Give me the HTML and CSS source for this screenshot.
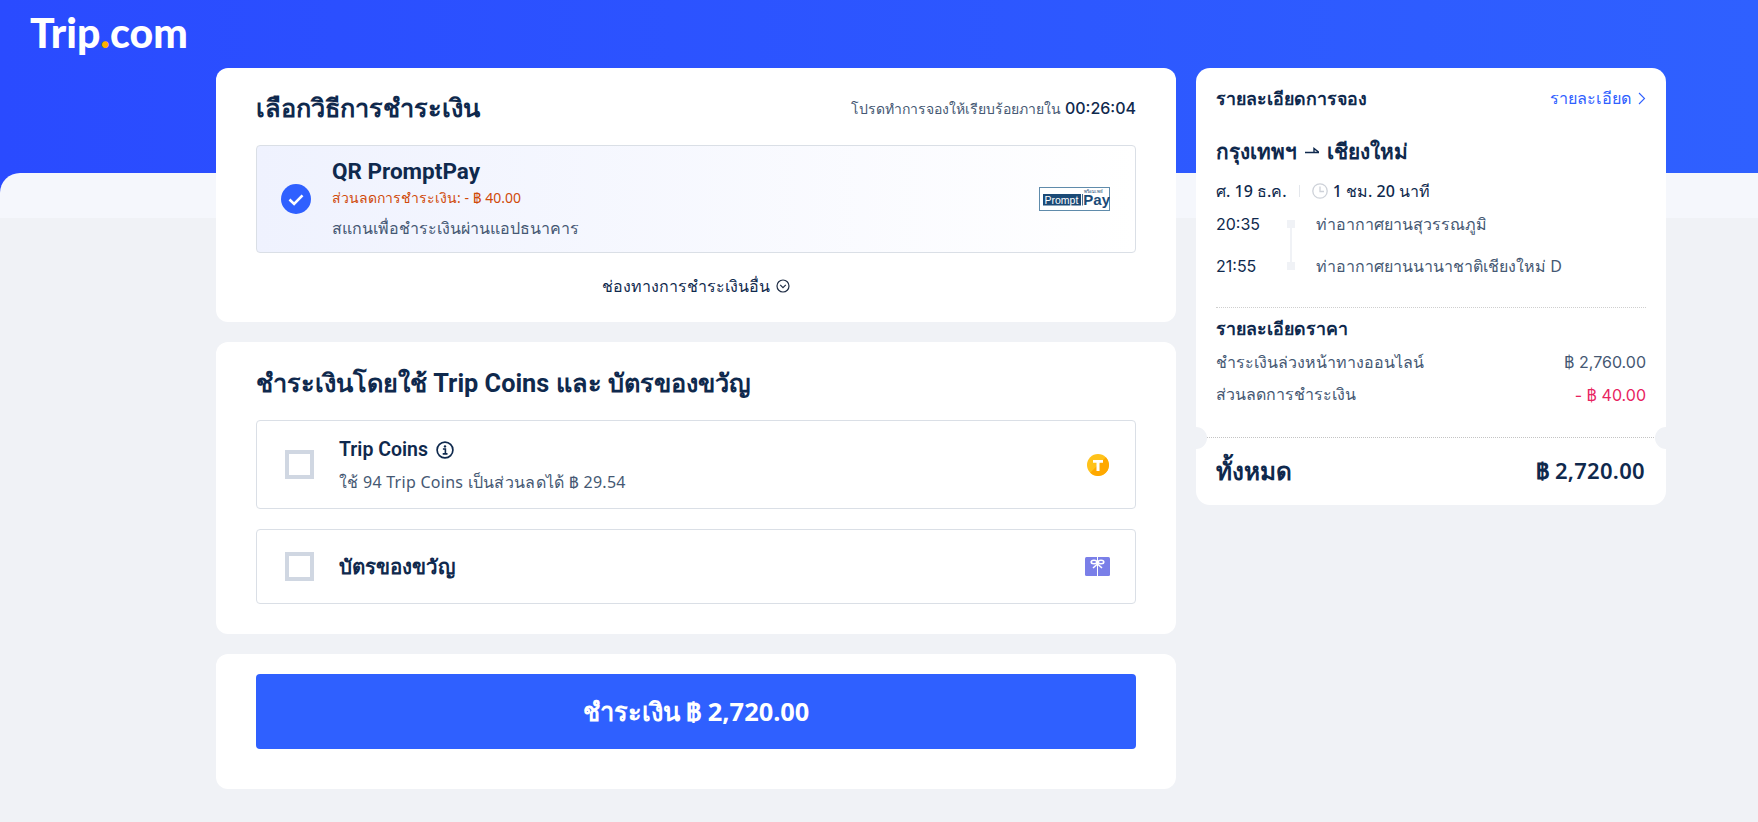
FILE: index.html
```html
<!DOCTYPE html>
<html lang="th">
<head>
    <meta charset="UTF-8">
    <meta name="viewport" content="width=device-width, initial-scale=1.0">
    <title>Trip.com</title>
    <link rel="stylesheet" href="styles.css">
</head>
<body>
    <div class="hero"></div>
    <div class="hero-band"></div>

    <header class="top-bar">
        <a class="logo">Trip<span class="logo-dot">.</span>com</a>
    </header>

    <main class="layout">
        <div class="main-col">
            <section class="card pay-card">
                <div class="card-head">
                    <h2>เลือกวิธีการชำระเงิน</h2>
                    <div class="timer">โปรดทำการจองให้เรียบร้อยภายใน <b>00:26:04</b></div>
                </div>
                <div class="option option-selected">
                    <span class="radio">
                        <svg width="30" height="30" viewBox="0 0 30 30"><circle cx="15" cy="15" r="15" fill="#2f60ff"/><path d="M8.5 15.500l4.600 4.400 8.400-8.600" fill="none" stroke="#fff" stroke-width="2.600"/></svg>
                    </span>
                    <div class="option-text">
                        <div class="option-title">QR PromptPay</div>
                        <div class="option-discount">ส่วนลดการชำระเงิน: - ฿ 40.00</div>
                        <div class="option-desc">สแกนเพื่อชำระเงินผ่านแอปธนาคาร</div>
                    </div>
                    <svg class="pp-logo" width="71" height="24" viewBox="0 0 71 24">
                        <rect x="0.5" y="0.5" width="70" height="23" fill="#fff" stroke="#5f8bab"/>
                        <rect x="4" y="7" width="38" height="11.500" fill="#1b4a76"/>
                        <text x="5.500" y="16.500" class="pp-prompt">Prompt</text>
                        <rect x="43" y="7" width="0.800" height="11.500" fill="#1b4a76"/>
                        <text x="44.300" y="17.500" class="pp-pay">Pay</text>
                        <text x="45" y="5.500" class="pp-thai">พร้อมเพย์</text>
                    </svg>
                </div>
                <div class="more-pay">
                    <span>ช่องทางการชำระเงินอื่น</span>
                    <svg width="14" height="14" viewBox="0 0 14 14"><circle cx="7" cy="7" r="6" fill="none" stroke="#1f2d45" stroke-width="1.200"/><path d="M4.200 5.800L7 8.600l2.800-2.800" fill="none" stroke="#1f2d45" stroke-width="1.200"/></svg>
                </div>
            </section>

            <section class="card coin-card">
                <h2>ชำระเงินโดยใช้ Trip Coins และ บัตรของขวัญ</h2>
                <div class="option option-coins">
                    <span class="checkbox"></span>
                    <div class="option-text">
                        <div class="coin-title">Trip Coins
                            <svg width="18" height="18" viewBox="0 0 18 18"><circle cx="9" cy="9" r="7.900" fill="none" stroke="#0f294d" stroke-width="1.700"/><circle cx="9" cy="5.400" r="1.200" fill="#0f294d"/><path d="M6.900 8h2.500v4.600M6.700 12.900h4.800" fill="none" stroke="#0f294d" stroke-width="1.600"/></svg>
                        </div>
                        <div class="option-desc">ใช้ 94 Trip Coins เป็นส่วนลดได้ ฿ 29.54</div>
                    </div>
                    <svg class="end-icon" width="22" height="22" viewBox="0 0 22 22"><circle cx="11" cy="11" r="11" fill="#ffc21a"/><path d="M3.200 18.800A11 11 0 0 0 18.800 3.200z" fill="#ffa800"/><path d="M6 6h10v2.700h-3.500V17H9.500V8.700H6z" fill="#fff"/></svg>
                </div>
                <div class="option option-gift">
                    <span class="checkbox"></span>
                    <div class="coin-title">บัตรของขวัญ</div>
                    <svg class="end-icon" width="25" height="19" viewBox="0 0 25 19"><rect width="25" height="19" rx="1.500" fill="#7a7fe8"/><path d="M12.500 0v19" stroke="#fff" stroke-width="1"/><ellipse cx="9" cy="5" rx="2.800" ry="1.700" fill="none" stroke="#fff" stroke-width="1.600"/><ellipse cx="16" cy="5" rx="2.800" ry="1.700" fill="none" stroke="#fff" stroke-width="1.600"/><path d="M12.500 7L8 11M12.500 7l4.500 4" fill="none" stroke="#fff" stroke-width="1.600"/></svg>
                </div>
            </section>

            <section class="card submit-card">
                <button class="pay-btn" type="button">ชำระเงิน ฿ 2,720.00</button>
            </section>
        </div>

        <aside class="card summary">
            <div class="summary-head">
                <h3>รายละเอียดการจอง</h3>
                <a class="detail-link">รายละเอียด
                    <svg width="8" height="13" viewBox="0 0 8 13"><path d="M1 1l5.500 5.500L1 12" fill="none" stroke="#2f60ff" stroke-width="1.100"/></svg>
                </a>
            </div>
            <div class="route">กรุงเทพฯ
                <svg width="14" height="8" viewBox="0 0 14 8"><path d="M0 5.500h14M14 5.500L9 1.500v4" fill="none" stroke="#0f294d" stroke-width="1.400"/></svg>
                เชียงใหม่</div>
            <div class="date-row">
                <span>ศ. 19 ธ.ค.</span>
                <i class="date-sep"></i>
                <svg width="16" height="16" viewBox="0 0 16 16"><circle cx="8" cy="8" r="7.200" fill="none" stroke="#ced2d9" stroke-width="1.300"/><path d="M8 3.500V8.500h4" fill="none" stroke="#ced2d9" stroke-width="1.300"/></svg>
                <span>1 ชม. 20 นาที</span>
            </div>
            <div class="stops">
                <div class="stop"><span class="stop-time">20:35</span><i class="stop-dot"></i><span class="stop-name">ท่าอากาศยานสุวรรณภูมิ</span></div>
                <div class="stop stop-last"><span class="stop-time">21:55</span><i class="stop-dot"></i><span class="stop-name">ท่าอากาศยานนานาชาติเชียงใหม่ D</span></div>
            </div>
            <div class="price-box">
                <h3>รายละเอียดราคา</h3>
                <div class="price-row"><span>ชำระเงินล่วงหน้าทางออนไลน์</span><span class="price-num">฿ 2,760.00</span></div>
                <div class="price-row"><span>ส่วนลดการชำระเงิน</span><span class="price-num price-minus">- ฿ 40.00</span></div>
            </div>
            <div class="total-row">
                <span class="total-label">ทั้งหมด</span>
                <span class="total-value">฿ 2,720.00</span>
            </div>
        </aside>
    </main>
</body>
</html>
```

FILE: styles.css
```css
* {
    box-sizing: border-box;
}
body {
    margin: 0;
    min-height: 822px;
    position: relative;
    font-family: "Noto Sans", "Open Sans", sans-serif;
    color: #0f294d;
    background-color: #f0f2f6;
}
h2, h3 {
    margin: 0;
}
.hero {
    position: absolute;
    top: 0;
    left: 0;
    width: 100%;
    height: 200px;
    background: linear-gradient(90deg, #2a4bff, #2f60ff);
}
.hero-band {
    position: absolute;
    top: 173px;
    left: 0;
    width: 100%;
    height: 45px;
    border-top-left-radius: 20px;
    background-color: #f5f7fc;
}
.top-bar {
    position: relative;
    height: 68px;
    padding: 8px 0 0 30px;
}
.logo {
    font-family: Lato, sans-serif;
    font-size: 41px;
    line-height: 50px;
    font-weight: 900;
    color: #fff;
}
.logo-dot {
    color: #ffb000;
}
.layout {
    position: relative;
    display: flex;
    align-items: flex-start;
    gap: 20px;
    margin-left: 216px;
}
.main-col {
    width: 960px;
    display: flex;
    flex-direction: column;
    gap: 20px;
}
.card {
    background-color: #fff;
    border-radius: 12px;
}
.pay-card {
    height: 254px;
    padding: 21px 40px 0;
}
.card-head {
    display: flex;
    justify-content: space-between;
    align-items: center;
    height: 40px;
    margin-bottom: 16px;
}
.card h2 {
    font-family: Roboto, sans-serif;
    font-size: 25.300px;
    line-height: 40px;
    font-weight: 700;
}
.timer {
    font-size: 14px;
    color: #455873;
}
.timer b {
    font-family: Inter, sans-serif;
    font-size: 16px;
    font-weight: 500;
    color: #0f294d;
}
.option {
    display: flex;
    align-items: center;
    border: 1px solid #dadfe6;
    border-radius: 4px;
}
.option-selected {
    height: 108px;
    padding-left: 24px;
    background: linear-gradient(90deg, #eff2fe, #ffffff);
}
.radio {
    display: flex;
    margin-right: 21px;
}
.option-text {
    flex: 1;
}
.option-title {
    font-family: Roboto, sans-serif;
    font-size: 22.500px;
    line-height: 30px;
    font-weight: 700;
    margin-top: -3px;
}
.option-discount {
    font-size: 14px;
    line-height: 20px;
    margin-top: 2px;
    color: #d04a0a;
}
.option-desc {
    font-size: 16px;
    line-height: 24px;
    color: #455873;
}
.option-selected .option-desc {
    margin-top: 8px;
}
.pp-logo {
    margin-right: 25px;
}
.pp-prompt {
    font-family: "Liberation Sans", sans-serif;
    font-size: 10.500px;
    fill: #fff;
}
.pp-pay {
    font-family: "Liberation Sans", sans-serif;
    font-size: 15px;
    font-weight: 700;
    fill: #1b4a76;
}
.pp-thai {
    font-size: 4.500px;
    fill: #1b4a76;
}
.more-pay {
    display: flex;
    justify-content: center;
    align-items: center;
    gap: 6px;
    margin-top: 21px;
    font-size: 16px;
    line-height: 24px;
    color: #0f294d;
}
.coin-card {
    height: 292px;
    padding: 22px 40px 0;
}
.option-coins {
    height: 89px;
    margin-top: 16px;
    padding: 0 26px 0 28px;
}
.option-gift {
    height: 75px;
    margin-top: 20px;
    padding: 0 25px 0 28px;
}
.checkbox {
    flex: none;
    width: 29px;
    height: 29px;
    margin-right: 25px;
    border: 4px solid #d0d7e2;
}
.coin-title {
    flex: 1;
    display: flex;
    align-items: center;
    gap: 8px;
    font-family: Roboto, sans-serif;
    font-size: 19.500px;
    line-height: 28px;
    font-weight: 600;
}
.option-gift .coin-title {
    font-size: 20.500px;
    font-weight: 700;
}
.option-coins .coin-title {
    margin-top: 1px;
}
.option-coins .option-desc {
    margin-top: 6px;
    letter-spacing: 0.270px;
}
.submit-card {
    height: 135px;
    padding: 20px 40px;
}
.pay-btn {
    width: 100%;
    height: 75px;
    border: none;
    border-radius: 4px;
    background-color: #2f60ff;
    color: #fff;
    font-family: "Noto Sans", sans-serif;
    font-size: 25.400px;
    font-weight: 700;
    cursor: pointer;
}
.summary {
    width: 470px;
    height: 437px;
    padding: 0 20px;
    border-radius: 14px;
    position: relative;
}
.summary-head {
    display: flex;
    justify-content: space-between;
    align-items: center;
    height: 60px;
}
.summary h3 {
    font-size: 17.800px;
    line-height: 24px;
    font-weight: 700;
}
.detail-link {
    display: flex;
    align-items: center;
    gap: 6px;
    font-size: 16.200px;
    color: #2f60ff;
}
.route {
    display: flex;
    align-items: center;
    gap: 8px;
    margin-top: 10px;
    font-size: 20.800px;
    line-height: 26px;
    font-weight: 700;
}
.date-row {
    display: flex;
    align-items: center;
    margin-top: 15px;
    font-size: 16px;
    line-height: 24px;
    font-weight: 500;
}
.date-sep {
    width: 1px;
    height: 12px;
    margin: 0 12px;
    background-color: #e4e7ec;
}
.date-row svg {
    margin-right: 5px;
}
.stops {
    margin-top: 9px;
    padding-bottom: 29px;
    border-bottom: 1px dotted #cfcfcf;
}
.stop {
    position: relative;
    display: flex;
    align-items: center;
    height: 24px;
    font-size: 16px;
}
.stop-last {
    margin-top: 18px;
}
.stop-time {
    width: 71px;
    font-family: Inter, sans-serif;
}
.stop-dot {
    width: 8px;
    height: 8px;
    margin-right: 21px;
    background-color: #f0f2f6;
}
.stop:first-child .stop-dot::after {
    content: "";
    position: absolute;
    left: 74px;
    top: 16px;
    width: 2px;
    height: 36px;
    background-color: #f0f2f6;
}
.stop-name {
    color: #455873;
}
.price-box {
    margin-top: 8px;
}
.price-row {
    display: flex;
    justify-content: space-between;
    align-items: center;
    height: 32.500px;
    font-size: 16px;
    color: #455873;
}
.price-box h3 + .price-row {
    margin-top: 6px;
}
.price-num {
    font-family: Inter, sans-serif;
}
.price-minus {
    color: #e8245f;
}
.total-row {
    position: absolute;
    left: 0;
    right: 0;
    top: 369px;
    display: flex;
    justify-content: space-between;
    align-items: center;
    height: 68px;
    padding: 0 21px 0 20px;
    border-top: 1px dotted #c4c4c4;
}
.total-row::before, .total-row::after {
    content: "";
    position: absolute;
    top: -11px;
    width: 22px;
    height: 22px;
    border-radius: 50%;
    background-color: #f0f2f6;
}
.total-row::before {
    left: -11px;
}
.total-row::after {
    right: -11px;
}
.total-label {
    font-size: 24.300px;
    font-weight: 700;
}
.total-value {
    font-size: 22px;
    font-weight: 600;
    letter-spacing: 0.300px;
}
```
